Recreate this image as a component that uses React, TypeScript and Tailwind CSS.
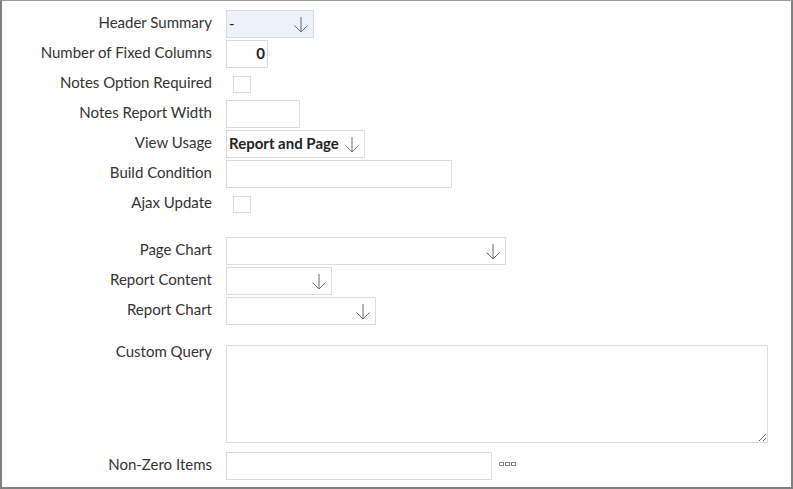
import React from "react";

// Thin down arrow used on the select boxes
function DownArrow() {
  return (
    <svg width="14" height="17" viewBox="0 0 14 17" className="shrink-0">
      <path
        d="M7 1 V16 M0.5 9.5 L7 16 L13.5 9.5"
        fill="none"
        stroke="#6b6b6b"
        strokeWidth="1"
      />
    </svg>
  );
}

function Row({
  label,
  children,
  className = "",
  top = false,
}: {
  label: string;
  children: React.ReactNode;
  className?: string;
  top?: boolean;
}) {
  return (
    <div className={`flex ${top ? "items-start" : "items-center"} ${className}`}>
      <div
        className={`relative w-[210px] shrink-0 text-right text-[15px] text-[#333] ${
          top ? "-top-[1px] leading-[15px]" : "-top-[2px] leading-[28px]"
        }`}
      >
        {label}
      </div>
      <div className="ml-[14px] flex items-center">{children}</div>
    </div>
  );
}

function Select({
  width,
  value,
  bold = false,
  bg = "bg-white",
}: {
  width: string;
  value?: string;
  bold?: boolean;
  bg?: string;
}) {
  return (
    <div
      className={`${width} ${bg} flex h-[28px] items-center justify-between border border-[#dcdcdc] pl-[2px] pr-[5px]`}
    >
      <span
        className={`relative -top-[1px] text-[15px] text-[#222] ${bold ? "font-bold" : ""}`}
      >
        {value}
      </span>
      <DownArrow />
    </div>
  );
}

function TextBox({ width, children }: { width: string; children?: React.ReactNode }) {
  return (
    <div
      className={`${width} flex h-[28px] items-center justify-end border border-[#dcdcdc] bg-white pr-[2px]`}
    >
      {children}
    </div>
  );
}

function CheckBox() {
  return <div className="ml-[7px] h-[17px] w-[18px] border border-[#dcdcdc] bg-white" />;
}

export default function App() {
  return (
    <div
      className="h-[489px] w-[793px] overflow-hidden border-t border-r-2 border-b-2 border-l-2 border-t-[#999] border-r-[#808080] border-b-[#808080] border-l-[#808080] bg-white pt-[9px]"
      style={{ fontFamily: "Lato, 'Open Sans', sans-serif" }}
    >
      <div className="flex flex-col gap-[2px]">
        <Row label="Header Summary">
          <Select width="w-[88px]" value="-" bg="bg-[#edf1f9]" />
        </Row>
        <Row label="Number of Fixed Columns">
          <TextBox width="w-[42px]">
            <span className="relative -top-[1px] text-[15px] font-bold text-[#222]">0</span>
          </TextBox>
        </Row>
        <Row label="Notes Option Required">
          <CheckBox />
        </Row>
        <Row label="Notes Report Width">
          <TextBox width="w-[74px]" />
        </Row>
        <Row label="View Usage">
          <Select width="w-[139px]" value="Report and Page" bold />
        </Row>
        <Row label="Build Condition">
          <TextBox width="w-[226px]" />
        </Row>
        <Row label="Ajax Update">
          <CheckBox />
        </Row>
      </div>

      <div className="mt-[19px] flex flex-col gap-[2px]">
        <Row label="Page Chart">
          <Select width="w-[280px]" />
        </Row>
        <Row label="Report Content">
          <Select width="w-[106px]" />
        </Row>
        <Row label="Report Chart">
          <Select width="w-[150px]" />
        </Row>
      </div>

      <Row label="Custom Query" className="mt-[20px]" top>
        <textarea className="block h-[98px] w-[542px] resize border border-[#dcdcdc] bg-white outline-none" />
      </Row>

      <Row label="Non-Zero Items" className="mt-[9px]">
        <TextBox width="w-[266px]" />
        <div className="relative -top-[2px] ml-[7px] flex gap-[1px]">
          <span className="block h-[4px] w-[5px] border border-[#888]" />
          <span className="block h-[4px] w-[5px] border border-[#888]" />
          <span className="block h-[4px] w-[5px] border border-[#888]" />
        </div>
      </Row>
    </div>
  );
}
